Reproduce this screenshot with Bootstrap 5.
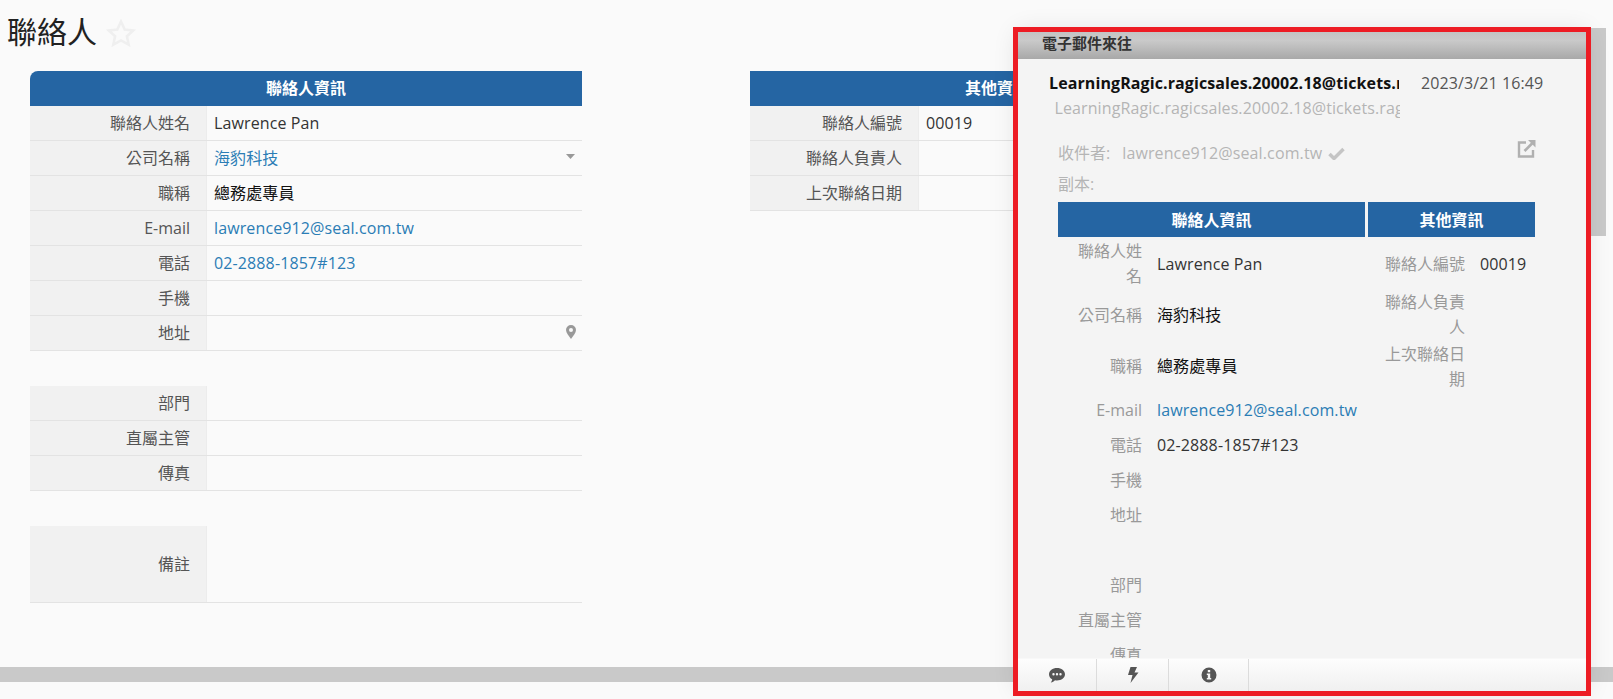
<!DOCTYPE html>
<html lang="zh-Hant">
<head>
<meta charset="utf-8">
<title>聯絡人</title>
<link rel="stylesheet" href="https://cdn.jsdelivr.net/npm/bootstrap@5.3.0/dist/css/bootstrap.min.css">
<style>
html,body{height:100%;overflow:hidden}
body{background:#fafafa;font-family:"Open Sans","Noto Sans CJK TC",sans-serif;font-size:16px;color:#333}
.viewport{width:1613px;height:699px;position:relative;overflow:hidden}
.page-area{height:667px;overflow:hidden}
.title-line{height:71px;padding:13px 0 0 7px}
.title-text{font-size:30px;line-height:38px;font-weight:400;color:#222;margin:0}
.star-ico{width:30px;height:28px;margin-left:9px;margin-top:6px}
.forms{padding-left:30px;gap:168px}
.form-block{width:552px;flex:none}
.form-block.other{width:494px}
.sheet-head{height:35px;background:#2565a3;color:#fff;font-weight:700;font-size:16px;line-height:35px;text-align:center}
.head-round{border-top-left-radius:8px}
.field{height:35px;border-bottom:1px solid #e3e3e3}
.field-label{flex:none;width:177px;background:#f1f1f1;border-right:1px solid #ececec;text-align:right;padding-right:16px;color:#555;line-height:34px}
.other .field-label{width:169px}
.field-value{flex:1;padding-left:7px;line-height:35px;color:#333;position:relative;letter-spacing:.12px}
.val-dark{color:#111}
.val-link{color:#2b7db5}
.field-gap{height:35px}
.field-tall{height:77px}
.field-tall .field-label{line-height:76px}
.field-ico{position:absolute}
.caret-pos{top:13px;right:7px}
.pin-pos{top:9px;right:6px}
.hscroll{height:15px;background:#c9c9c9}
.vscroll{position:absolute;left:1591px;top:28px;width:15px;height:208px;background:#c9c9c9}
.mail-panel{position:absolute;left:1018px;top:32px;width:568px;height:659px;background:#f4f4f4;box-shadow:0 0 24px rgba(0,0,0,.12)}
.red-frame{position:absolute;left:1013px;top:27px;width:578px;height:669px;border:5px solid #ed1c24;pointer-events:none}
.mail-head{height:27px;flex:none;background:linear-gradient(#c4c4c4,#cacaca 30%,#a8a8a8);padding-left:24px;font-weight:700;font-size:15px;line-height:23px;color:#333}
.mail-body{flex:1;overflow:hidden;min-height:0}
.meta-top{padding:12px 0 0 31px;height:37px}
.sender{width:350px;flex:none;overflow:hidden;white-space:nowrap;font-weight:700;font-size:16px;line-height:24px;color:#111;letter-spacing:.1px}
.stamp{margin-left:22px;font-size:16px;line-height:24px;color:#555;white-space:nowrap;letter-spacing:.1px}
.sender-sub{margin-left:36.5px;width:345px;overflow:hidden;white-space:nowrap;line-height:24px;height:24px;font-size:16px;color:#b5b5b5;letter-spacing:.1px}
.meta-line{padding-left:40px;color:#b5b5b5;font-size:16px;line-height:24px;position:relative}
.meta-to{margin-top:21px}
.meta-cc{margin-top:7px}
.to-addr{margin-left:12px;letter-spacing:.12px}
.check-ico{margin-left:6px;width:17px;height:13px;vertical-align:-1px}
.open-ico{position:absolute;left:499px;top:-2px;width:19px;height:19px}
.mail-table{margin:6px 0 0 40px;width:477px;table-layout:fixed}
.c1{width:92px}.c2{width:215px}.c3{width:3px}.c4{width:105px}.c5{width:62px}
.mail-table th{background:#2565a3;background-clip:padding-box;color:#fff;font-size:16px;font-weight:700;text-align:center;height:36px;padding:0;border-bottom:2px solid #f4f4f4}
.mail-table td{padding:0;vertical-align:middle;line-height:25px}
.mail-table tr.rt{height:51.6px}
.mail-table tr.rs{height:35px}
.m-label{text-align:right;color:#999;padding-right:8px !important;padding-left:8px !important}
.m-value{padding-left:7px !important;color:#333;letter-spacing:.12px}
.m-dark{color:#111}
.mail-foot{height:32px;flex:none;background:linear-gradient(#fdfdfd,#f0f0f0);box-shadow:0 -1px 0 #f8f8f8}
.foot-tab{height:100%;border-right:1px solid #dcdcdc;display:flex;align-items:center;justify-content:center}
.tab-a{width:79px}.tab-b{width:72px}.tab-c{width:80px}
.foot-ico{width:16px;height:16px;fill:#555}
</style>
</head>
<body>
<div class="viewport">
  <div class="page-area">
    <div class="title-line d-flex align-items-start">
      <h1 class="title-text">聯絡人</h1>
      <svg class="star-ico" viewBox="0 0 30 28"><path d="M15 2.500l3.700 8 8.600 1-6.400 5.800 1.800 8.400L15 21.400l-7.700 4.300 1.800-8.400-6.400-5.800 8.600-1z" fill="none" stroke="#efefef" stroke-width="2.6"/></svg>
    </div>
    <div class="forms d-flex">
      <div class="form-block">
        <div class="sheet-head head-round">聯絡人資訊</div>
        <div class="field d-flex"><div class="field-label">聯絡人姓名</div><div class="field-value">Lawrence Pan</div></div>
        <div class="field d-flex"><div class="field-label">公司名稱</div><div class="field-value val-link">海豹科技<svg class="field-ico caret-pos" width="9" height="5" viewBox="0 0 9 5"><path d="M0 0h9L4.500 5z" fill="#999"/></svg></div></div>
        <div class="field d-flex"><div class="field-label">職稱</div><div class="field-value val-dark">總務處專員</div></div>
        <div class="field d-flex"><div class="field-label">E-mail</div><div class="field-value val-link">lawrence912@seal.com.tw</div></div>
        <div class="field d-flex"><div class="field-label">電話</div><div class="field-value val-link">02-2888-1857#123</div></div>
        <div class="field d-flex"><div class="field-label">手機</div><div class="field-value"></div></div>
        <div class="field d-flex"><div class="field-label">地址</div><div class="field-value"><svg class="field-ico pin-pos" width="10" height="14" viewBox="0 0 10 14"><path fill-rule="evenodd" d="M5 0a5 5 0 0 1 5 5c0 3-3 6-5 9-2-3-5-6-5-9a5 5 0 0 1 5-5zm0 3a2 2 0 1 0 0 4 2 2 0 0 0 0-4z" fill="#999"/></svg></div></div>
        <div class="field-gap"></div>
        <div class="field d-flex"><div class="field-label">部門</div><div class="field-value"></div></div>
        <div class="field d-flex"><div class="field-label">直屬主管</div><div class="field-value"></div></div>
        <div class="field d-flex"><div class="field-label">傳真</div><div class="field-value"></div></div>
        <div class="field-gap"></div>
        <div class="field field-tall d-flex"><div class="field-label">備註</div><div class="field-value"></div></div>
      </div>
      <div class="form-block other">
        <div class="sheet-head">其他資訊</div>
        <div class="field d-flex"><div class="field-label">聯絡人編號</div><div class="field-value">00019</div></div>
        <div class="field d-flex"><div class="field-label">聯絡人負責人</div><div class="field-value"></div></div>
        <div class="field d-flex"><div class="field-label">上次聯絡日期</div><div class="field-value"></div></div>
      </div>
    </div>
  </div>
  <div class="hscroll"></div>
  <div class="vscroll"></div>

  <aside class="mail-panel d-flex flex-column">
    <div class="mail-head">電子郵件來往</div>
    <div class="mail-body">
      <div class="meta-top d-flex">
        <div class="sender">LearningRagic.ragicsales.20002.18@tickets.ragic.com</div>
        <div class="stamp">2023/3/21 16:49</div>
      </div>
      <div class="sender-sub">LearningRagic.ragicsales.20002.18@tickets.ragic.com</div>
      <div class="meta-line meta-to">收件者:<span class="to-addr">lawrence912@seal.com.tw</span><svg class="check-ico" viewBox="0 0 17 13"><path d="M1.500 7l4.500 4.500L15.500 2" fill="none" stroke="#c4c4c4" stroke-width="3.500"/></svg>
        <svg class="open-ico" viewBox="0 0 19 19"><path d="M9 3.500H2v14h14V11" fill="none" stroke="#b0b0b0" stroke-width="2.400"/><path d="M7.500 12L16 3.500" fill="none" stroke="#b0b0b0" stroke-width="2.600"/><path d="M11 1h7.500v7.500z" fill="#b0b0b0"/></svg>
      </div>
      <div class="meta-line meta-cc">副本:</div>
      <table class="mail-table">
        <colgroup><col class="c1"><col class="c2"><col class="c3"><col class="c4"><col class="c5"></colgroup>
        <thead><tr><th colspan="2">聯絡人資訊</th><td></td><th colspan="2">其他資訊</th></tr></thead>
        <tbody>
          <tr class="rt"><td class="m-label">聯絡人姓名</td><td class="m-value">Lawrence Pan</td><td></td><td class="m-label">聯絡人編號</td><td class="m-value">00019</td></tr>
          <tr class="rt"><td class="m-label">公司名稱</td><td class="m-value m-dark">海豹科技</td><td></td><td class="m-label">聯絡人負責人</td><td></td></tr>
          <tr class="rt"><td class="m-label">職稱</td><td class="m-value m-dark">總務處專員</td><td></td><td class="m-label">上次聯絡日期</td><td></td></tr>
          <tr class="rs"><td class="m-label">E-mail</td><td class="m-value"><a class="val-link text-decoration-none" href="#">lawrence912@seal.com.tw</a></td><td colspan="3"></td></tr>
          <tr class="rs"><td class="m-label">電話</td><td class="m-value">02-2888-1857#123</td><td colspan="3"></td></tr>
          <tr class="rs"><td class="m-label">手機</td><td colspan="4"></td></tr>
          <tr class="rs"><td class="m-label">地址</td><td colspan="4"></td></tr>
          <tr class="rs"><td colspan="5"></td></tr>
          <tr class="rs"><td class="m-label">部門</td><td colspan="4"></td></tr>
          <tr class="rs"><td class="m-label">直屬主管</td><td colspan="4"></td></tr>
          <tr class="rs"><td class="m-label">傳真</td><td colspan="4"></td></tr>
        </tbody>
      </table>
    </div>
    <div class="mail-foot d-flex">
      <div class="foot-tab tab-a"><svg class="foot-ico" viewBox="0 0 16 16"><path fill-rule="evenodd" d="M8 1c4.400 0 8 2.700 8 6.200s-3.600 6.200-8 6.200c-.7 0-1.300-.1-2-.2C5 14.300 3.500 15.200 1.800 15.500c.8-.9 1.300-1.900 1.400-3.200C1.200 11.200 0 9.300 0 7.200 0 3.700 3.600 1 8 1zM4.500 6a1.200 1.200 0 1 0 0 2.400 1.200 1.200 0 0 0 0-2.400zm3.500 0a1.200 1.200 0 1 0 0 2.400A1.200 1.200 0 0 0 8 6zm3.500 0a1.200 1.200 0 1 0 0 2.400 1.200 1.200 0 0 0 0-2.400z"/></svg></div>
      <div class="foot-tab tab-b"><svg class="foot-ico" viewBox="0 0 16 16"><path d="M5.500 0h6.500l-2.500 5.500h4L5.500 16l2-8H3z"/></svg></div>
      <div class="foot-tab tab-c"><svg class="foot-ico" viewBox="0 0 16 16"><path fill-rule="evenodd" d="M8 .5a7.500 7.500 0 1 1 0 15 7.500 7.500 0 0 1 0-15zM6.800 3v2.200h2.400V3zM5.800 6.500v1.500h1v3h-1v1.500h4.400V11h-1V6.500z"/></svg></div>
    </div>
  </aside>
  <div class="red-frame"></div>
</div>
<script src="https://cdn.jsdelivr.net/npm/bootstrap@5.3.0/dist/js/bootstrap.bundle.min.js"></script>
</body>
</html>
